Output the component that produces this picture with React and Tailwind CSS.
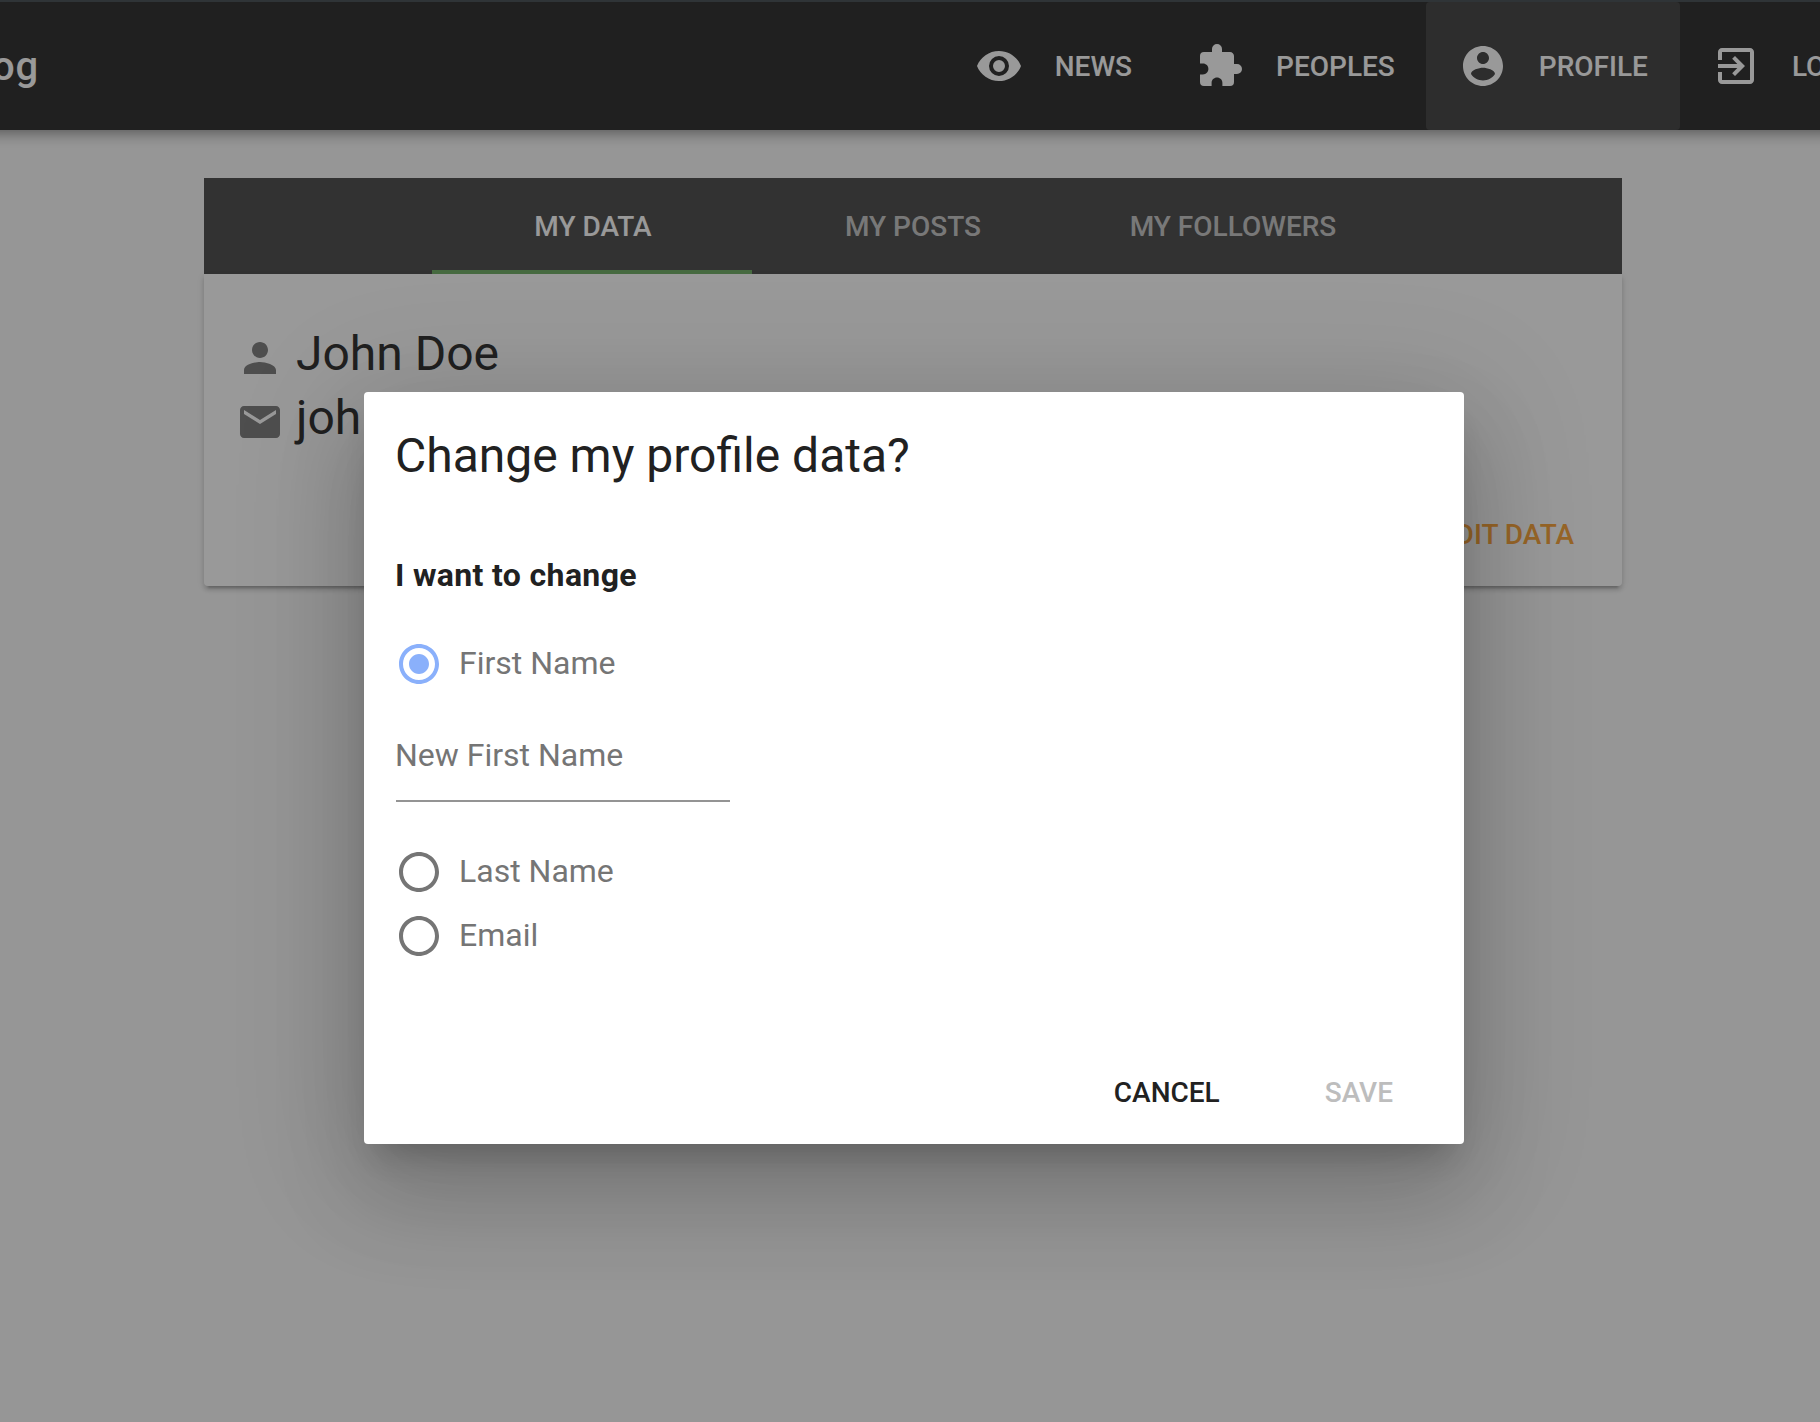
import React from "react";

const ICONS = {
  eye: "M12,9A3,3 0 0,0 9,12A3,3 0 0,0 12,15A3,3 0 0,0 15,12A3,3 0 0,0 12,9M12,17A5,5 0 0,1 7,12A5,5 0 0,1 12,7A5,5 0 0,1 17,12A5,5 0 0,1 12,17M12,4.5C7,4.5 2.73,7.61 1,12C2.73,16.39 7,19.5 12,19.5C17,19.5 21.27,16.39 23,12C21.27,7.61 17,4.5 12,4.5Z",
  puzzle: "M20.5,11H19V7C19,5.89 18.1,5 17,5H13V3.5A2.5,2.5 0 0,0 10.5,1A2.5,2.5 0 0,0 8,3.5V5H4A2,2 0 0,0 2,7V10.8H3.5C5,10.8 6.2,12 6.2,13.5C6.2,15 5,16.2 3.5,16.2H2V20A2,2 0 0,0 4,22H7.8V20.5C7.8,19 9,17.8 10.5,17.8C12,17.8 13.2,19 13.2,20.5V22H17A2,2 0 0,0 19,20V16H20.5A2.5,2.5 0 0,0 23,13.5A2.5,2.5 0 0,0 20.5,11Z",
  account: "M12 2C6.48 2 2 6.48 2 12s4.48 10 10 10 10-4.48 10-10S17.52 2 12 2zm0 3c1.66 0 3 1.34 3 3s-1.34 3-3 3-3-1.34-3-3 1.34-3 3-3zm0 14.2c-2.5 0-4.71-1.28-6-3.22.03-1.99 4-3.08 6-3.08 1.99 0 5.97 1.09 6 3.08-1.29 1.94-3.5 3.22-6 3.22z",
  exit: "M10.09 15.59L11.5 17l5-5-5-5-1.41 1.41L12.67 11H3v2h9.67l-2.58 2.59zM19 3H5c-1.11 0-2 .9-2 2v4h2V5h14v14H5v-4H3v4c0 1.1.89 2 2 2h14c1.1 0 2-.9 2-2V5c0-1.1-.9-2-2-2z",
  person: "M12 12c2.21 0 4-1.79 4-4s-1.79-4-4-4-4 1.79-4 4 1.79 4 4 4zm0 2c-2.67 0-8 1.34-8 4v2h16v-2c0-2.66-5.33-4-8-4z",
  email: "M20 4H4c-1.1 0-1.99.9-1.99 2L2 18c0 1.1.9 2 2 2h16c1.1 0 2-.9 2-2V6c0-1.1-.9-2-2-2zm0 4l-8 5-8-5V6l8 5 8-5v2z",
  radioOff: "M12 2C6.48 2 2 6.48 2 12s4.48 10 10 10 10-4.48 10-10S17.52 2 12 2zm0 18c-4.42 0-8-3.58-8-8s3.58-8 8-8 8 3.58 8 8-3.58 8-8 8z",
  radioOn: "M12 7c-2.76 0-5 2.24-5 5s2.24 5 5 5 5-2.24 5-5-2.24-5-5-5zm0-5C6.48 2 2 6.48 2 12s4.48 10 10 10 10-4.48 10-10S17.52 2 12 2zm0 18c-4.42 0-8-3.58-8-8s3.58-8 8-8 8 3.58 8 8-3.58 8-8 8z",
};

function Icon({ name, className = "" }) {
  return (
    <svg viewBox="0 0 24 24" className={`size-12 shrink-0 fill-current ${className}`} aria-hidden="true">
      <path d={ICONS[name]} />
    </svg>
  );
}

function NavButton({ icon, label, active }) {
  return (
    <button
      className={`flex h-32 shrink-0 items-center gap-8 rounded pr-8 text-[28px] font-medium text-white ${
        active ? "-ml-px bg-[#393939] pl-[33px]" : "pl-8"
      }`}
    >
      <Icon name={icon} />
      <span className="pt-0.5">{label}</span>
    </button>
  );
}

function Tab({ label, active }) {
  return (
    <button
      className={`flex h-24 w-80 items-center justify-center border-b-4 pl-0.5 pt-1.5 text-[28px] font-medium ${
        active ? "border-[#67a95b] text-white" : "border-transparent text-white/70"
      }`}
    >
      {label}
    </button>
  );
}

function Radio({ label, checked }) {
  return (
    <label className="flex h-16 items-center gap-4 text-[32px] text-[#757575]">
      <Icon name={checked ? "radioOn" : "radioOff"} className={checked ? "text-[#8ab0fb]" : ""} />
      <span className="pb-0.5 leading-[48px]">{label}</span>
    </label>
  );
}

export default function App() {
  return (
    <div className="relative h-[1422px] w-[1820px] overflow-hidden bg-[#fafafa] font-[Roboto,sans-serif] text-[#212121]">
      <header className="-mx-16 flex h-[130px] border-t-2 border-[#3c454a] bg-[#212121] px-16 shadow-[0_4px_8px_-2px_rgba(0,0,0,0.2),0_8px_10px_0_rgba(0,0,0,0.14),0_2px_20px_0_rgba(0,0,0,0.12)]">
        <div className="flex h-32 w-[39px] shrink-0 items-center justify-end pt-0.5 text-[40px] font-medium tracking-[0.02em] text-white">
          Blog
        </div>
        <nav className="ml-[903.75px] flex h-32">
          <NavButton icon="eye" label="NEWS" />
          <NavButton icon="puzzle" label="PEOPLES" />
          <NavButton icon="account" label="PROFILE" active />
          <NavButton icon="exit" label="LOGOUT" />
        </nav>
      </header>

      <main className="ml-[204px] mt-12 w-[1418px]">
        <div className="flex h-24 justify-center bg-[#424242] pr-0.5">
          <Tab label="MY DATA" active />
          <Tab label="MY POSTS" />
          <Tab label="MY FOLLOWERS" />
        </div>
        <section className="flex h-[312px] flex-col rounded-b bg-white px-8 pt-12 shadow-[0_6px_2px_-4px_rgba(0,0,0,0.2),0_4px_4px_0_rgba(0,0,0,0.14),0_2px_10px_0_rgba(0,0,0,0.12)]">
          <div className="flex h-16 gap-3 text-[48px] leading-[64px]">
            <Icon name="person" className="mt-3 text-[#757575]" />
            <span>John Doe</span>
          </div>
          <div className="flex h-16 gap-3 text-[48px] leading-[64px]">
            <Icon name="email" className="mt-3 text-[#757575]" />
            <span>joh</span>
          </div>
          <div className="mt-[53px] flex justify-end pr-4 text-[28px] font-medium leading-[64px] text-[#fb9f2e]">
            EDIT DATA
          </div>
        </section>
      </main>

      <div className="absolute inset-0 bg-[#212121]/46" />

      <div
        role="dialog"
        className="absolute left-[364px] top-[392px] flex h-[752px] w-[1100px] flex-col rounded bg-white pl-[31px] pr-8 pt-8 shadow-[0_22px_30px_-14px_rgba(0,0,0,0.2),0_48px_90px_6px_rgba(0,0,0,0.14),0_18px_124px_18px_rgba(0,0,0,0.12)]"
      >
        <h1 className="text-[48px] leading-[64px]">Change my profile data?</h1>
        <h2 className="mt-[63px] text-[32px] font-bold leading-[48px] tracking-[0.35px]">I want to change</h2>
        <div className="mt-[33px]">
          <Radio label="First Name" checked />
        </div>
        <div className="ml-px mt-9 h-[70px] w-[334px] border-b-2 border-[#949494] text-[32px] leading-[46px] text-[#757575]">
          <span className="-ml-px">New First Name</span>
        </div>
        <div className="mt-[38px]">
          <Radio label="Last Name" />
          <Radio label="Email" />
        </div>
        <div className="mt-[93px] flex h-16 justify-end gap-[105px] pr-[39px] text-[28px] font-medium leading-[64px]">
          <button>CANCEL</button>
          <button className="text-[#bdbdbd]">SAVE</button>
        </div>
      </div>
    </div>
  );
}
